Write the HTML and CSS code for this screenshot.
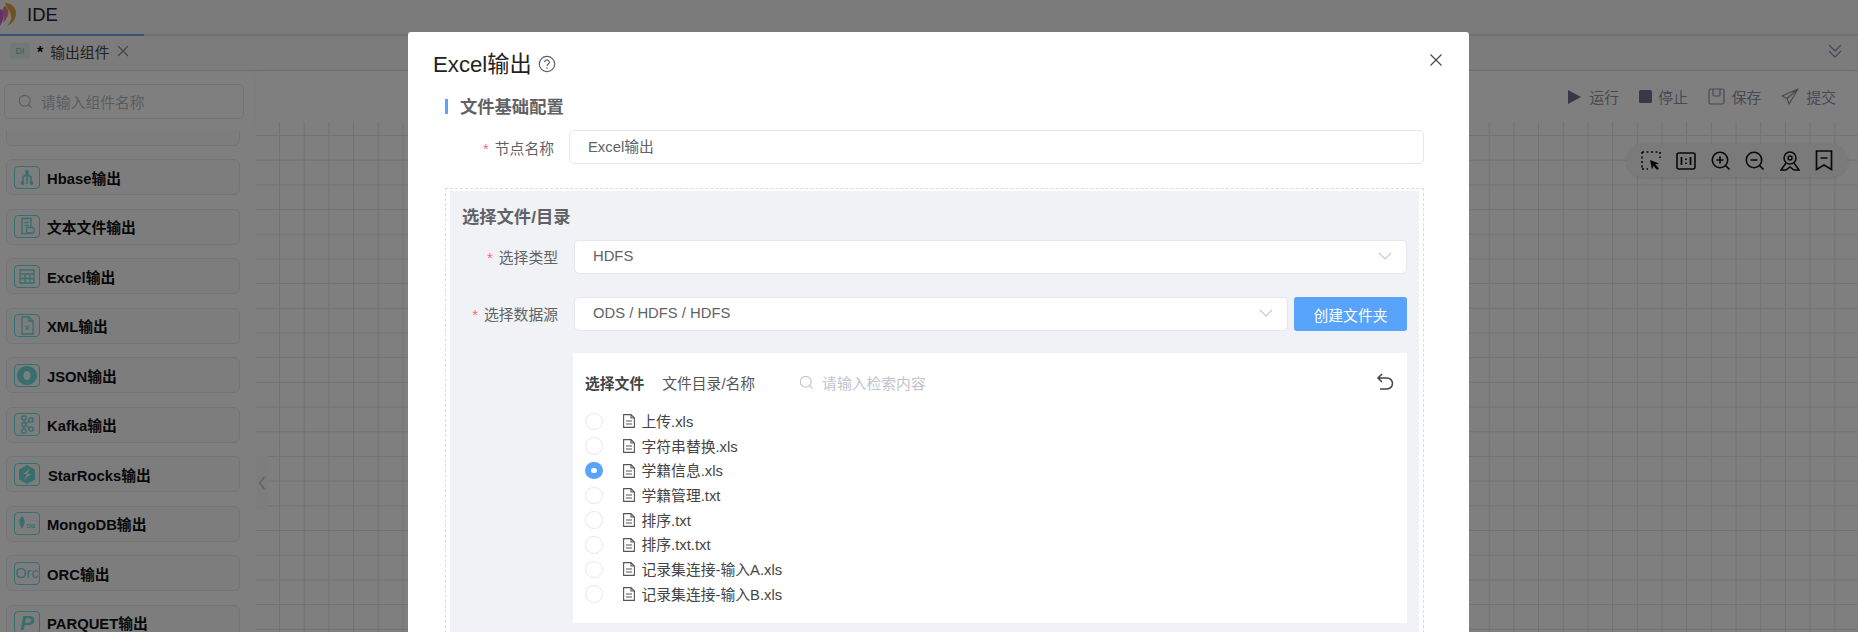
FILE: index.html
```html
<!DOCTYPE html>
<html lang="zh-CN">
<head>
  <meta charset="UTF-8">
  <meta name="viewport" content="width=device-width, initial-scale=1.0">
  <title>IDE - Excel输出</title>
  <link rel="stylesheet" href="styles.css">
</head>
<body>
  <div class="app">
    <header class="top-bar">
      <svg class="logo" viewBox="0 0 20 24" width="20" height="24">
        <path d="M9 0c6 0 11 4 11 10 0 6-4 11-9 13 3-3 5-7 4-11-1-4-4-7-6-12z" fill="#e2a23e"/>
        <path d="M9 3c3 2 4 6 3 9-1 3-3 6-5 8 1-3 1-6 0-9-1-3-1-6 2-8z" fill="#ee7f86"/>
        <path d="M5 6c2 2 3 6 2 10-1 3-2 5-3 7-2-1-4-4-4-7 0-4 2-8 5-10z" fill="#b864d8"/>
      </svg>
      <span class="app-name">IDE</span>
    </header>

    <div class="tab-bar">
      <div class="tab">
        <span class="tab-badge">DI</span>
        <span class="tab-star">*</span>
        <span class="tab-name">输出组件</span>
        <svg class="tab-close" viewBox="0 0 12 12" width="12" height="12"><path d="M1 1l10 10M11 1L1 11" stroke="#8a8a8a" stroke-width="1.1" fill="none"/></svg>
      </div>
      <svg class="tab-more" viewBox="0 0 16 16" width="16" height="16"><path d="M2 2l6 6 6-6M2 8l6 6 6-6" stroke="#8f93a8" stroke-width="1.3" fill="none"/></svg>
    </div>

    <div class="main">
      <aside class="sidebar">
        <div class="side-search">
          <svg viewBox="0 0 16 16" width="15" height="15"><circle cx="7.2" cy="7.2" r="5.8" stroke="#b5b8bf" stroke-width="1.2" fill="none"/><path d="M11.5 11.5l3 3" stroke="#b5b8bf" stroke-width="1.2"/></svg>
          <span>请输入组件名称</span>
        </div>
        <div class="comp-scroll">
          <div class="comp-list">
            <div class="comp"></div>
            <div class="comp">
              <span class="comp-icon"><svg viewBox="0 0 24 21" width="24" height="21"><path d="M12 5v12M12 7l-4 3v6M12 7l4 3v6" stroke="#6fdcdc" stroke-width="1.6" fill="none"/><circle cx="12" cy="5" r="1.9" fill="#6fdcdc"/><circle cx="7.500" cy="16" r="1.9" fill="#6fdcdc"/><circle cx="16.500" cy="16" r="1.9" fill="#6fdcdc"/></svg></span>
              <span>Hbase输出</span>
            </div>
            <div class="comp">
              <span class="comp-icon"><svg viewBox="0 0 24 21" width="24" height="21"><path d="M7 2.500h9v15H7zM9.500 6.500h4M9.500 9.500h4" stroke="#6fdcdc" stroke-width="1.4" fill="none"/><rect x="11.500" y="11.500" width="7.500" height="5.500" rx="1" fill="#fbfbfd" stroke="#6fdcdc" stroke-width="1.4"/></svg></span>
              <span>文本文件输出</span>
            </div>
            <div class="comp">
              <span class="comp-icon"><svg viewBox="0 0 24 21" width="24" height="21"><path d="M5 4h14v13H5zM5 8h14M5 12.500h14M10 8v9M15 8v9" stroke="#6fdcdc" stroke-width="1.3" fill="none"/></svg></span>
              <span>Excel输出</span>
            </div>
            <div class="comp">
              <span class="comp-icon"><svg viewBox="0 0 24 21" width="24" height="21"><path d="M7 2h7l4 4v13H7zM14 2v4h4" stroke="#6fdcdc" stroke-width="1.300" fill="none"/><path d="M10.500 10.500l3.500 4.500M14 10.500l-3.500 4.500" stroke="#6fdcdc" stroke-width="1.100"/></svg></span>
              <span>XML输出</span>
            </div>
            <div class="comp">
              <span class="comp-icon"><svg viewBox="0 0 24 21" width="24" height="21"><path fill-rule="evenodd" d="M12 1a10 9.500 0 1 0 .01 0zM12 6a3.500 4.500 0 1 1-.01 0z" fill="#6fdcdc"/></svg></span>
              <span>JSON输出</span>
            </div>
            <div class="comp">
              <span class="comp-icon"><svg viewBox="0 0 24 21" width="24" height="21"><g stroke="#6fdcdc" stroke-width="1.300" fill="none"><circle cx="9" cy="4" r="2.200"/><circle cx="16" cy="6" r="2.200"/><circle cx="9" cy="10.500" r="2"/><circle cx="9" cy="17" r="2.200"/><circle cx="16" cy="15" r="2.200"/><path d="M9 6.200v2.300M9 12.500v2.300M11 9.500l3-2.200M11 11.500l3 2.200"/></g></svg></span>
              <span>Kafka输出</span>
            </div>
            <div class="comp">
              <span class="comp-icon"><svg viewBox="0 0 24 21" width="24" height="21"><path fill-rule="evenodd" d="M12 1l8 4.500v10L12 20l-8-4.500v-10zM15 5l-7 5h4l-3 6 7-6h-4z" fill="#6fdcdc"/></svg></span>
              <span class="comp-star">StarRocks输出</span>
            </div>
            <div class="comp">
              <span class="comp-icon"><svg viewBox="0 0 24 21" width="24" height="21"><path d="M7 3c3 3 4 6 0 13-4-7-3-10 0-13z" fill="#6fdcdc"/><text x="11.500" y="15" class="icon-db">DB</text></svg></span>
              <span>MongoDB输出</span>
            </div>
            <div class="comp">
              <span class="comp-icon"><span class="icon-orc">Orc</span></span>
              <span>ORC输出</span>
            </div>
            <div class="comp">
              <span class="comp-icon"><span class="icon-p">P</span></span>
              <span>PARQUET输出</span>
            </div>
          </div>
        </div>
      </aside>

      <section class="work">
        <div class="toolbar">
          <span class="tool-btn"><svg viewBox="0 0 13 14" width="13" height="14"><path d="M0 0l13 7-13 7z" fill="#6e7391"/></svg><span class="tool-gap">运行</span></span>
          <span class="tool-btn"><svg viewBox="0 0 13 13" width="13" height="13"><rect width="13" height="13" rx="1.500" fill="#6e7391"/></svg><span class="tool-tight">停止</span></span>
          <span class="tool-btn"><svg viewBox="0 0 17 17" width="17" height="17"><path d="M2.500 1h12A1.500 1.500 0 0 1 16 2.500v12a1.500 1.500 0 0 1-1.500 1.500h-12A1.500 1.500 0 0 1 1 14.500v-12A1.500 1.500 0 0 1 2.500 1zM5 1v6a1 1 0 0 0 1 1h5a1 1 0 0 0 1-1V1" stroke="#8f93a8" stroke-width="1.200" fill="none"/></svg><span>保存</span></span>
          <span class="tool-btn"><svg viewBox="0 0 18 17" width="18" height="17"><path d="M17 1L1 8l5 2.500L8 16zM17 1L6 10.500" stroke="#8f93a8" stroke-width="1.200" fill="none" stroke-linejoin="round"/></svg><span>提交</span></span>
        </div>
        <div class="canvas">
          <div class="collapse-handle"><svg viewBox="0 0 8 14" width="8" height="14"><path d="M6.500 1L1.500 7l5 6" stroke="#bdbdbd" stroke-width="1.200" fill="none"/></svg></div>
          <div class="canvas-tools">
            <svg viewBox="0 0 20 20" width="20" height="20"><path d="M1 1h18M1 1v17" stroke="#111" stroke-width="1.600" stroke-dasharray="2 2.500" fill="none"/><path d="M19 1v6M1 18h6" stroke="#111" stroke-width="1.600" stroke-dasharray="2 2.500"/><path d="M9 9l9 3.500-3.500 1 3.500 4-2 1.500-3.500-4-1.500 3.500z" fill="#111"/></svg>
            <svg viewBox="0 0 20 18" width="20" height="18"><rect x="1" y="1" width="18" height="16" rx="2" stroke="#111" stroke-width="1.600" fill="none"/><path d="M5.500 5v8M14.500 5v8M10 6.500v1.500M10 10.500v1.500" stroke="#111" stroke-width="1.800"/></svg>
            <svg viewBox="0 0 20 20" width="20" height="20"><circle cx="9" cy="9" r="7.700" stroke="#111" stroke-width="1.600" fill="none"/><path d="M14.500 14.500l4 4M5.500 9h7M9 5.500v7" stroke="#111" stroke-width="1.700"/></svg>
            <svg viewBox="0 0 20 20" width="20" height="20"><circle cx="9" cy="9" r="7.700" stroke="#111" stroke-width="1.600" fill="none"/><path d="M14.500 14.500l4 4M5.500 9h7" stroke="#111" stroke-width="1.700"/></svg>
            <svg viewBox="0 0 20 20" width="20" height="20"><circle cx="10" cy="7" r="6" stroke="#111" stroke-width="1.500" fill="none"/><circle cx="10" cy="7" r="2" stroke="#111" stroke-width="1.500" fill="none"/><path d="M6 12l-5 7h5l4-3 4 3h5l-5-7" stroke="#111" stroke-width="1.500" fill="none"/></svg>
            <svg viewBox="0 0 18 21" width="18" height="21"><path d="M1.500 1h15v18.500L9 15l-7.500 4.500zM5.500 8h7" stroke="#111" stroke-width="1.700" fill="none"/></svg>
          </div>
        </div>
      </section>
    </div>
  </div>

  <div class="mask">
    <div class="dialog">
      <div class="dialog-head">
        <span class="dialog-title">Excel输出</span>
        <svg class="dialog-help" viewBox="0 0 18 18" width="18" height="18"><circle cx="9" cy="9" r="7.700" stroke="#606266" stroke-width="1.200" fill="none"/><path d="M6.700 7.200a2.300 2.300 0 1 1 3.600 1.900c-.9.600-1.300 1-1.300 2" stroke="#606266" stroke-width="1.200" fill="none"/><circle cx="9" cy="13" r=".8" fill="#606266"/></svg>
        <svg class="dialog-close" viewBox="0 0 12 12" width="12" height="12"><path d="M.5.500l11 11M11.500.500l-11 11" stroke="#444" stroke-width="1.100" fill="none"/></svg>
      </div>
      <div class="dialog-body">
        <div class="section-title"><span>文件基础配置</span></div>
        <div class="form-row">
          <label class="form-label"><i>*</i>节点名称</label>
          <div class="field">Excel输出</div>
        </div>

        <div class="dashed-box">
          <div class="grey-box">
            <div class="box-title">选择文件/目录</div>
            <div class="form-row form-row-inner">
              <label class="form-label"><i>*</i>选择类型</label>
              <div class="field field-select">HDFS
                <svg viewBox="0 0 14 8" width="14" height="8"><path d="M1 1l6 6 6-6" stroke="#c3c6cc" stroke-width="1.100" fill="none"/></svg>
              </div>
            </div>
            <div class="form-row form-row-inner">
              <label class="form-label"><i>*</i>选择数据源</label>
              <div class="field field-select">ODS / HDFS / HDFS
                <svg viewBox="0 0 14 8" width="14" height="8"><path d="M1 1l6 6 6-6" stroke="#c3c6cc" stroke-width="1.100" fill="none"/></svg>
              </div>
              <button class="btn-primary">创建文件夹</button>
            </div>

            <div class="file-panel">
              <div class="file-head">
                <b>选择文件</b>
                <span class="file-col">文件目录/名称</span>
                <svg class="file-search-icon" viewBox="0 0 16 16" width="15" height="15"><circle cx="7.200" cy="7.200" r="5.800" stroke="#c0c4cc" stroke-width="1.200" fill="none"/><path d="M11.500 11.500l3 3" stroke="#c0c4cc" stroke-width="1.200"/></svg>
                <span class="file-placeholder">请输入检索内容</span>
                <svg class="file-back" viewBox="0 0 18 18" width="18" height="18"><path d="M6 1L2 5l4 4M2 5h9a5 5 0 0 1 0 11H4" stroke="#444" stroke-width="1.500" fill="none"/></svg>
              </div>
              <ul class="file-list">
                <li><span class="radio"></span><svg class="file-icon" viewBox="0 0 12 14" width="12" height="14"><path d="M.6.600h7.400l3.400 3.400v9.400H.6zM8 .600V4h3.400M3 7h6M3 10h6" stroke="#555" stroke-width="1.100" fill="none"/></svg><span class="file-name">上传.xls</span></li>
                <li><span class="radio"></span><svg class="file-icon" viewBox="0 0 12 14" width="12" height="14"><path d="M.6.600h7.400l3.400 3.400v9.400H.6zM8 .600V4h3.400M3 7h6M3 10h6" stroke="#555" stroke-width="1.100" fill="none"/></svg><span class="file-name">字符串替换.xls</span></li>
                <li><span class="radio radio-on"></span><svg class="file-icon" viewBox="0 0 12 14" width="12" height="14"><path d="M.6.600h7.400l3.400 3.400v9.400H.6zM8 .600V4h3.400M3 7h6M3 10h6" stroke="#555" stroke-width="1.100" fill="none"/></svg><span class="file-name">学籍信息.xls</span></li>
                <li><span class="radio"></span><svg class="file-icon" viewBox="0 0 12 14" width="12" height="14"><path d="M.6.600h7.400l3.400 3.400v9.400H.6zM8 .600V4h3.400M3 7h6M3 10h6" stroke="#555" stroke-width="1.100" fill="none"/></svg><span class="file-name">学籍管理.txt</span></li>
                <li><span class="radio"></span><svg class="file-icon" viewBox="0 0 12 14" width="12" height="14"><path d="M.6.600h7.400l3.400 3.400v9.400H.6zM8 .600V4h3.400M3 7h6M3 10h6" stroke="#555" stroke-width="1.100" fill="none"/></svg><span class="file-name">排序.txt</span></li>
                <li><span class="radio"></span><svg class="file-icon" viewBox="0 0 12 14" width="12" height="14"><path d="M.6.600h7.400l3.400 3.400v9.400H.6zM8 .600V4h3.400M3 7h6M3 10h6" stroke="#555" stroke-width="1.100" fill="none"/></svg><span class="file-name">排序.txt.txt</span></li>
                <li><span class="radio"></span><svg class="file-icon" viewBox="0 0 12 14" width="12" height="14"><path d="M.6.600h7.400l3.400 3.400v9.400H.6zM8 .600V4h3.400M3 7h6M3 10h6" stroke="#555" stroke-width="1.100" fill="none"/></svg><span class="file-name">记录集连接-输入A.xls</span></li>
                <li><span class="radio"></span><svg class="file-icon" viewBox="0 0 12 14" width="12" height="14"><path d="M.6.600h7.400l3.400 3.400v9.400H.6zM8 .600V4h3.400M3 7h6M3 10h6" stroke="#555" stroke-width="1.100" fill="none"/></svg><span class="file-name">记录集连接-输入B.xls</span></li>
              </ul>
            </div>
          </div>
        </div>
      </div>
    </div>
  </div>
</body>
</html>
```

FILE: styles.css
```css
* {
  margin: 0;
  padding: 0;
  box-sizing: border-box;
}

html, body {
  height: 632px;
  overflow: hidden;
}

body {
  font-family: "Liberation Sans", "Noto Sans CJK SC", sans-serif;
  font-size: 14.8px;
  color: #333;
  background-color: #fff;
}

.app {
  height: 632px;
  display: flex;
  flex-direction: column;
}

/* 顶部 */
.top-bar {
  height: 36px;
  flex: none;
  display: flex;
  align-items: center;
  padding-bottom: 4px;
  background-color: #f6f6f6;
  border-bottom: 2px solid #e0e0e0;
  position: relative;
}

.top-bar::after {
  content: "";
  position: absolute;
  left: 0;
  bottom: -2px;
  width: 144px;
  height: 2px;
  background-color: #6aa5e8;
}

.logo {
  margin-left: -4px;
  flex: none;
}

.app-name {
  margin-left: 11px;
  font-size: 18.5px;
  color: #222;
}

/* 标签栏 */
.tab-bar {
  height: 35px;
  flex: none;
  display: flex;
  align-items: center;
  justify-content: space-between;
  padding: 0 15px 4px 10px;
  background-color: #f8f8f8;
  border-bottom: 1px solid #dcdcdc;
}

.tab {
  display: flex;
  align-items: center;
}

.tab-badge {
  width: 20px;
  height: 16px;
  border-radius: 3px;
  background-color: #dff2ea;
  color: #6ec5ae;
  font-size: 9px;
  line-height: 16px;
  text-align: center;
}

.tab-star {
  margin-left: 7px;
  font-weight: bold;
  color: #111;
  font-size: 16px;
  height: 14px;
}

.tab-name {
  margin-left: 7px;
  color: #444;
}

.tab-close {
  margin-left: 8px;
}

/* 主体 */
.main {
  flex: 1;
  display: flex;
  min-height: 0;
}

.sidebar {
  width: 256px;
  flex: none;
  padding: 13px 0 0 4px;
  background-color: #fff;
  display: flex;
  flex-direction: column;
}

.side-search {
  width: 240px;
  height: 35px;
  flex: none;
  display: flex;
  align-items: center;
  gap: 8px;
  padding-left: 13px;
  border: 1px solid #e4e7ed;
  border-radius: 5px;
  color: #b5b8bf;
}

.comp-scroll {
  flex: 1;
  margin-top: 12px;
  overflow: hidden;
}

.comp-list {
  margin-top: -21.500px;
  padding-left: 2px;
  display: flex;
  flex-direction: column;
  gap: 13.500px;
}

.comp {
  width: 234px;
  height: 36px;
  flex: none;
  display: flex;
  align-items: center;
  gap: 7px;
  padding-left: 7px;
  border: 1px solid #e6e8ee;
  border-radius: 6px;
  background-color: #fbfbfd;
  font-weight: bold;
  color: #111;
}

.comp-icon {
  width: 26px;
  height: 23px;
  flex: none;
  display: flex;
  align-items: center;
  justify-content: center;
  border: 1.500px solid #6fdcdc;
  border-radius: 4px;
  overflow: hidden;
}

.comp-star {
  margin-left: 1px;
}

.icon-db {
  font-size: 6px;
  fill: #6fdcdc;
}

.icon-orc {
  font-size: 14.500px;
  font-weight: normal;
  color: #6fdcdc;
}

.icon-p {
  font-size: 21px;
  font-weight: bold;
  font-style: italic;
  color: #6fdcdc;
}

.work {
  flex: 1;
  display: flex;
  flex-direction: column;
  min-width: 0;
}

.toolbar {
  height: 51px;
  flex: none;
  display: flex;
  align-items: center;
  justify-content: flex-end;
  gap: 20px;
  padding: 0 22px 0 0;
  background-color: #fff;
  color: #8f93a8;
  box-shadow: 0 2px 6px rgba(0, 0, 0, 0.06);
  position: relative;
}

.tool-btn {
  display: flex;
  align-items: center;
  gap: 7px;
}

.tool-gap {
  margin-left: 2px;
}

.tool-tight {
  margin-left: -1px;
}

.canvas {
  flex: 1;
  position: relative;
  background-color: #fff;
  background-image:
    linear-gradient(to right, #e4e4e4 1px, transparent 1px),
    linear-gradient(to bottom, #e4e4e4 1px, transparent 1px);
  background-size: 24.7px 24.7px;
  background-position: 23px 13px;
}

.collapse-handle {
  position: absolute;
  left: 0;
  top: 334px;
  width: 12px;
  height: 54px;
  display: flex;
  align-items: center;
  justify-content: center;
  background-color: #fafafa;
}

.canvas-tools {
  position: absolute;
  top: 22px;
  right: 11px;
  width: 220px;
  height: 33px;
  display: flex;
  align-items: center;
  justify-content: space-between;
  padding: 0 14px;
  border-radius: 17px;
  background-color: #f5f5f5;
  box-shadow: 0 1px 4px rgba(0, 0, 0, 0.12);
}

/* 遮罩和弹窗 */
.mask {
  position: fixed;
  top: 0;
  left: 0;
  right: 0;
  bottom: 0;
  background-color: rgba(0, 0, 0, 0.5);
  overflow: hidden;
}

.dialog {
  width: 1061px;
  height: 640px;
  margin: 32px 0 0 408px;
  background-color: #fff;
  border-radius: 3px;
}

.dialog-head {
  height: 54px;
  display: flex;
  align-items: center;
  gap: 6px;
  padding: 8px 0 0 25px;
}

.dialog-title {
  margin-bottom: 2px;
  font-size: 22.2px;
  color: #222;
}

.dialog-help {
  margin-top: 2px;
}

.dialog-close {
  margin-left: auto;
  margin-right: 27px;
  margin-top: -6px;
}

.dialog-body {
  padding: 13px 45px 0 37px;
}

.section-title span {
  display: block;
  height: 15px;
  line-height: 17px;
  padding-left: 12px;
  border-left: 3px solid #5aa2fa;
  font-size: 17.3px;
  font-weight: bold;
  color: #606266;
}

.form-row {
  display: flex;
  align-items: center;
  margin-top: 16px;
}

.form-label {
  width: 109px;
  flex: none;
  text-align: right;
  color: #606266;
}

.form-label i {
  margin-right: 6px;
  font-style: normal;
  color: #f56c6c;
}

.field {
  flex: 1;
  height: 34px;
  margin-left: 15px;
  padding-left: 18px;
  line-height: 32px;
  border: 1px solid #e4e7ed;
  border-radius: 5px;
  background-color: #fff;
  color: #606266;
}

.field-select {
  display: flex;
  align-items: center;
  justify-content: space-between;
  padding-right: 14px;
  padding-bottom: 2px;
}

.dashed-box {
  margin-top: 24px;
  padding: 2px 4px 0;
  border: 1px dashed #d9dce3;
  border-bottom: none;
}

.grey-box {
  padding: 0 12px 30px 12px;
  background-color: #f0f2f5;
}

.box-title {
  padding-top: 14px;
  line-height: 24px;
  font-size: 17.3px;
  font-weight: bold;
  color: #606266;
}

.form-row-inner {
  margin-top: 11px;
  margin-bottom: 24px;
}

.form-row-inner .form-label {
  width: 96px;
  margin-bottom: 2px;
}

.form-row-inner .field {
  height: 34px;
  margin-left: 16px;
}

.form-row-inner + .form-row-inner {
  margin-top: -1px;
}

.btn-primary {
  width: 113px;
  height: 34px;
  flex: none;
  margin-left: 6px;
  border: none;
  border-radius: 3px;
  background-color: #58a3fb;
  color: #fff;
  font: inherit;
}

.file-panel {
  margin-left: 111px;
  padding: 12px 13px 16px 12px;
  background-color: #fff;
  margin-top: -2px;
}

.file-head {
  height: 36px;
  margin-bottom: 8px;
  padding-bottom: 2px;
  display: flex;
  align-items: center;
  color: #555;
}

.file-head b {
  color: #444;
}

.file-col {
  margin-left: 18px;
}

.file-search-icon {
  margin-left: 44px;
}

.file-placeholder {
  margin-left: 8px;
  color: #c0c4cc;
}

.file-back {
  margin-left: auto;
}

.file-list {
  list-style: none;
}

.file-list li {
  height: 24.7px;
  display: flex;
  align-items: center;
  color: #444;
}

.file-name {
  margin-bottom: 2px;
}

.radio {
  width: 17.500px;
  height: 17.500px;
  flex: none;
  border: 1px solid #e4e7ed;
  border-radius: 50%;
  background-color: #fff;
}

.radio-on {
  border: 6px solid #58a3fb;
}

.file-icon {
  margin: 0 7px 0 20px;
  flex: none;
}
```
